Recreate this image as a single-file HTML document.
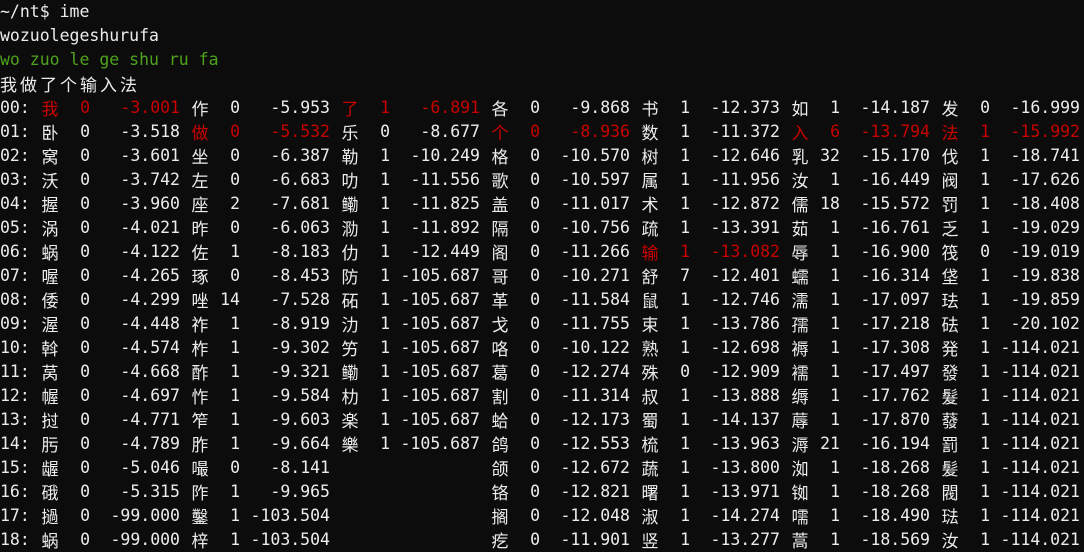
<!DOCTYPE html>
<html><head><meta charset="utf-8"><style>
html,body{margin:0;padding:0;background:#0c0c0c;}
body{width:1084px;height:550px;overflow:hidden;color:#ececec;font-family:"DejaVu Sans Mono","Liberation Mono","Noto Sans CJK SC",monospace;font-size:16.5px;}
.l{height:24px;line-height:24px;white-space:pre;position:relative;}
.g{color:#4ea21c;}
.cj{font-family:"Noto Sans CJK SC","WenQuanYi Zen Hei",sans-serif;font-size:17px;letter-spacing:3px;}
n,c,k,v,e{display:inline-block;height:24px;vertical-align:top;}
n{width:40px;}
c{width:20px;margin-right:10px;text-align:center;font-family:"Noto Sans CJK SC","WenQuanYi Zen Hei",sans-serif;font-size:17px;}
k{width:20px;margin-right:10px;text-align:right;}
v{width:80px;margin-right:10px;text-align:right;}
e{width:150px;}
.r{color:#c80000;}
</style></head><body>
<div class="l">~/nt$ ime</div>
<div class="l">wozuolegeshurufa</div>
<div class="l g">wo zuo le ge shu ru fa</div>
<div class="l cj">我做了个输入法</div>
<div class="l"><n>00:</n><c class="r">我</c><k class="r">0</k><v class="r">-3.001</v><c>作</c><k>0</k><v>-5.953</v><c class="r">了</c><k class="r">1</k><v class="r">-6.891</v><c>各</c><k>0</k><v>-9.868</v><c>书</c><k>1</k><v>-12.373</v><c>如</c><k>1</k><v>-14.187</v><c>发</c><k>0</k><v>-16.999</v></div>
<div class="l"><n>01:</n><c>卧</c><k>0</k><v>-3.518</v><c class="r">做</c><k class="r">0</k><v class="r">-5.532</v><c>乐</c><k>0</k><v>-8.677</v><c class="r">个</c><k class="r">0</k><v class="r">-8.936</v><c>数</c><k>1</k><v>-11.372</v><c class="r">入</c><k class="r">6</k><v class="r">-13.794</v><c class="r">法</c><k class="r">1</k><v class="r">-15.992</v></div>
<div class="l"><n>02:</n><c>窝</c><k>0</k><v>-3.601</v><c>坐</c><k>0</k><v>-6.387</v><c>勒</c><k>1</k><v>-10.249</v><c>格</c><k>0</k><v>-10.570</v><c>树</c><k>1</k><v>-12.646</v><c>乳</c><k>32</k><v>-15.170</v><c>伐</c><k>1</k><v>-18.741</v></div>
<div class="l"><n>03:</n><c>沃</c><k>0</k><v>-3.742</v><c>左</c><k>0</k><v>-6.683</v><c>叻</c><k>1</k><v>-11.556</v><c>歌</c><k>0</k><v>-10.597</v><c>属</c><k>1</k><v>-11.956</v><c>汝</c><k>1</k><v>-16.449</v><c>阀</c><k>1</k><v>-17.626</v></div>
<div class="l"><n>04:</n><c>握</c><k>0</k><v>-3.960</v><c>座</c><k>2</k><v>-7.681</v><c>鳓</c><k>1</k><v>-11.825</v><c>盖</c><k>0</k><v>-11.017</v><c>术</c><k>1</k><v>-12.872</v><c>儒</c><k>18</k><v>-15.572</v><c>罚</c><k>1</k><v>-18.408</v></div>
<div class="l"><n>05:</n><c>涡</c><k>0</k><v>-4.021</v><c>昨</c><k>0</k><v>-6.063</v><c>泐</c><k>1</k><v>-11.892</v><c>隔</c><k>0</k><v>-10.756</v><c>疏</c><k>1</k><v>-13.391</v><c>茹</c><k>1</k><v>-16.761</v><c>乏</c><k>1</k><v>-19.029</v></div>
<div class="l"><n>06:</n><c>蜗</c><k>0</k><v>-4.122</v><c>佐</c><k>1</k><v>-8.183</v><c>仂</c><k>1</k><v>-12.449</v><c>阁</c><k>0</k><v>-11.266</v><c class="r">输</c><k class="r">1</k><v class="r">-13.082</v><c>辱</c><k>1</k><v>-16.900</v><c>筏</c><k>0</k><v>-19.019</v></div>
<div class="l"><n>07:</n><c>喔</c><k>0</k><v>-4.265</v><c>琢</c><k>0</k><v>-8.453</v><c>防</c><k>1</k><v>-105.687</v><c>哥</c><k>0</k><v>-10.271</v><c>舒</c><k>7</k><v>-12.401</v><c>蠕</c><k>1</k><v>-16.314</v><c>垡</c><k>1</k><v>-19.838</v></div>
<div class="l"><n>08:</n><c>倭</c><k>0</k><v>-4.299</v><c>唑</c><k>14</k><v>-7.528</v><c>砳</c><k>1</k><v>-105.687</v><c>革</c><k>0</k><v>-11.584</v><c>鼠</c><k>1</k><v>-12.746</v><c>濡</c><k>1</k><v>-17.097</v><c>珐</c><k>1</k><v>-19.859</v></div>
<div class="l"><n>09:</n><c>渥</c><k>0</k><v>-4.448</v><c>祚</c><k>1</k><v>-8.919</v><c>氻</c><k>1</k><v>-105.687</v><c>戈</c><k>0</k><v>-11.755</v><c>束</c><k>1</k><v>-13.786</v><c>孺</c><k>1</k><v>-17.218</v><c>砝</c><k>1</k><v>-20.102</v></div>
<div class="l"><n>10:</n><c>斡</c><k>0</k><v>-4.574</v><c>柞</c><k>1</k><v>-9.302</v><c>竻</c><k>1</k><v>-105.687</v><c>咯</c><k>0</k><v>-10.122</v><c>熟</c><k>1</k><v>-12.698</v><c>褥</c><k>1</k><v>-17.308</v><c>発</c><k>1</k><v>-114.021</v></div>
<div class="l"><n>11:</n><c>莴</c><k>0</k><v>-4.668</v><c>酢</c><k>1</k><v>-9.321</v><c>鳓</c><k>1</k><v>-105.687</v><c>葛</c><k>0</k><v>-12.274</v><c>殊</c><k>0</k><v>-12.909</v><c>襦</c><k>1</k><v>-17.497</v><c>發</c><k>1</k><v>-114.021</v></div>
<div class="l"><n>12:</n><c>幄</c><k>0</k><v>-4.697</v><c>怍</c><k>1</k><v>-9.584</v><c>朸</c><k>1</k><v>-105.687</v><c>割</c><k>0</k><v>-11.314</v><c>叔</c><k>1</k><v>-13.888</v><c>缛</c><k>1</k><v>-17.762</v><c>髮</c><k>1</k><v>-114.021</v></div>
<div class="l"><n>13:</n><c>挝</c><k>0</k><v>-4.771</v><c>笮</c><k>1</k><v>-9.603</v><c>楽</c><k>1</k><v>-105.687</v><c>蛤</c><k>0</k><v>-12.173</v><c>蜀</c><k>1</k><v>-14.137</v><c>蓐</c><k>1</k><v>-17.870</v><c>蕟</c><k>1</k><v>-114.021</v></div>
<div class="l"><n>14:</n><c>肟</c><k>0</k><v>-4.789</v><c>胙</c><k>1</k><v>-9.664</v><c>樂</c><k>1</k><v>-105.687</v><c>鸽</c><k>0</k><v>-12.553</v><c>梳</c><k>1</k><v>-13.963</v><c>溽</c><k>21</k><v>-16.194</v><c>罰</c><k>1</k><v>-114.021</v></div>
<div class="l"><n>15:</n><c>龌</c><k>0</k><v>-5.046</v><c>嘬</c><k>0</k><v>-8.141</v><e></e><c>颌</c><k>0</k><v>-12.672</v><c>蔬</c><k>1</k><v>-13.800</v><c>洳</c><k>1</k><v>-18.268</v><c>髪</c><k>1</k><v>-114.021</v></div>
<div class="l"><n>16:</n><c>硪</c><k>0</k><v>-5.315</v><c>阼</c><k>1</k><v>-9.965</v><e></e><c>铬</c><k>0</k><v>-12.821</v><c>曙</c><k>1</k><v>-13.971</v><c>铷</c><k>1</k><v>-18.268</v><c>閥</c><k>1</k><v>-114.021</v></div>
<div class="l"><n>17:</n><c>撾</c><k>0</k><v>-99.000</v><c>鑿</c><k>1</k><v>-103.504</v><e></e><c>搁</c><k>0</k><v>-12.048</v><c>淑</c><k>1</k><v>-14.274</v><c>嚅</c><k>1</k><v>-18.490</v><c>琺</c><k>1</k><v>-114.021</v></div>
<div class="l"><n>18:</n><c>蜗</c><k>0</k><v>-99.000</v><c>梓</c><k>1</k><v>-103.504</v><e></e><c>疙</c><k>0</k><v>-11.901</v><c>竖</c><k>1</k><v>-13.277</v><c>蒿</c><k>1</k><v>-18.569</v><c>汝</c><k>1</k><v>-114.021</v></div>
</body></html>
